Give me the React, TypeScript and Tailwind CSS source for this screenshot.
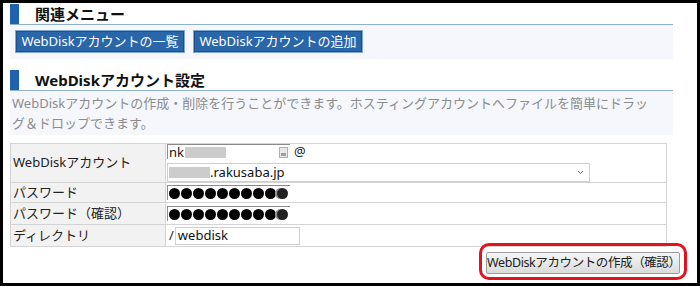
import React from 'react';

const font = { fontFamily: '"Noto Sans", "Noto Sans CJK JP", sans-serif' };

const Heading: React.FC<{ title: string; className?: string }> = ({ title, className = '' }) => (
  <div className={`flex h-[21px] w-[663px] items-end border-b border-[#8fb1cf] ${className}`}>
    <div className="h-[20px] w-[9px] bg-[#1f62ad]" />
    <h2 className="ml-[16px] self-center text-[15px] font-bold leading-none text-[#111]">{title}</h2>
  </div>
);

const MenuButton: React.FC<{ label: string }> = ({ label }) => (
  <button className="h-[23px] w-[170px] whitespace-nowrap border border-[#7ea7d4] bg-[#2a66aa] text-[13px] leading-none text-white shadow-[inset_0_0_0_1px_#1d4f88]">
    {label}
  </button>
);

const Dots: React.FC = () => (
  <div className="flex h-[15px] w-[123px] items-center gap-[1px] border-l border-t border-[#8a8a8a] bg-white pl-[1px]">
    {Array.from({ length: 10 }).map((_, i) => (
      <span
        key={i}
        className={`h-[11px] w-[11px] shrink-0 rounded-full ${i === 9 ? 'bg-[#222] shadow-[-2px_0_0_#9a9a9a]' : 'bg-black'}`}
      />
    ))}
  </div>
);

const Row: React.FC<{ label: string; h: string; children: React.ReactNode }> = ({ label, h, children }) => (
  <div className={`flex border-b border-[#d4d4d4] ${h}`}>
    <div className="flex w-[155px] shrink-0 items-center border-r border-[#d4d4d4] bg-[#f2f2f2] pl-[2px] text-[13px] text-[#222]">
      {label}
    </div>
    <div className="flex flex-1 flex-col justify-center pl-[1px]">{children}</div>
  </div>
);

export default function App() {
  return (
    <div className="h-[286px] w-[700px] overflow-hidden border-[3px] border-black bg-white pl-[7px]" style={font}>
      <Heading title="関連メニュー" className="mt-[1px]" />
      <div className="flex h-[34px] w-[663px] items-start gap-[8px] bg-[#f5f7fc] pl-[5px] pt-[5px]">
        <MenuButton label="WebDiskアカウントの一覧" />
        <MenuButton label="WebDiskアカウントの追加" />
      </div>

      <Heading title="WebDiskアカウント設定" className="mt-[11px]" />
      <div className="h-[44px] w-[663px] whitespace-nowrap bg-[#f5f7fc] pl-[2px] pt-[2px] text-[13px] leading-[20px] text-[#8c8c8c]">
        WebDiskアカウントの作成・削除を行うことができます。ホスティングアカウントへファイルを簡単にドラッ
        <br />
        グ＆ドロップできます。
      </div>

      <div className="mt-[8px] w-[657px] border-l border-r border-t border-[#d4d4d4]">
        <Row label="WebDiskアカウント" h="h-[39px]">
          <div className="flex items-center gap-[4px]">
            <div className="flex h-[15px] w-[123px] items-center border-l border-t border-[#8a8a8a] bg-white pl-[1px] text-[13px] leading-none text-[#111]">
              <span>nk</span>
              <span className="ml-[1px] h-[11px] w-[41px] bg-[#cccccc]" />
              <span className="ml-auto mr-[2px] flex h-[11px] w-[9px] items-end justify-center border border-[#b0b0b0] bg-[#e8e8e8]">
                <span className="mb-[1px] h-[3px] w-[5px] bg-[#a0a0a0]" />
              </span>
            </div>
            <span className="text-[13px] leading-none text-[#222]">@</span>
          </div>
          <div className="mt-[4px] flex h-[19px] w-[423px] items-center border border-[#cfcfcf] bg-white pl-[1px] text-[13px] leading-none text-[#111]">
            <span className="h-[11px] w-[41px] bg-[#cccccc]" />
            <span>.rakusaba.jp</span>
            <svg className="ml-auto mr-[5px]" width="7" height="5" viewBox="0 0 7 5">
              <path d="M1 1l2.5 2.5L6 1" fill="none" stroke="#777" strokeWidth="1" />
            </svg>
          </div>
        </Row>
        <Row label="パスワード" h="h-[20px]">
          <Dots />
        </Row>
        <Row label="パスワード（確認）" h="h-[22px]">
          <Dots />
        </Row>
        <Row label="ディレクトリ" h="h-[22px]">
          <div className="flex items-center text-[13px] leading-none text-[#222]">
            <span className="ml-[2px] mr-[1px]">/</span>
            <div className="flex h-[18px] w-[125px] items-center border border-[#cfcfcf] bg-white pl-[2px] text-[#111]">webdisk</div>
          </div>
        </Row>
      </div>

      <div className="flex w-[677px] justify-end">
        <div className="mt-[-4px] rounded-[10px] border-[3px] border-[#e3131d] px-[4px] py-[3px]">
          <button className="h-[22px] w-[194px] whitespace-nowrap rounded-[2px] border border-[#9c9c9c] bg-gradient-to-b from-[#f6f6f6] to-[#dadada] text-[12.5px] leading-none tracking-[-0.4px] text-[#222]">
            WebDiskアカウントの作成（確認）
          </button>
        </div>
      </div>
    </div>
  );
}
